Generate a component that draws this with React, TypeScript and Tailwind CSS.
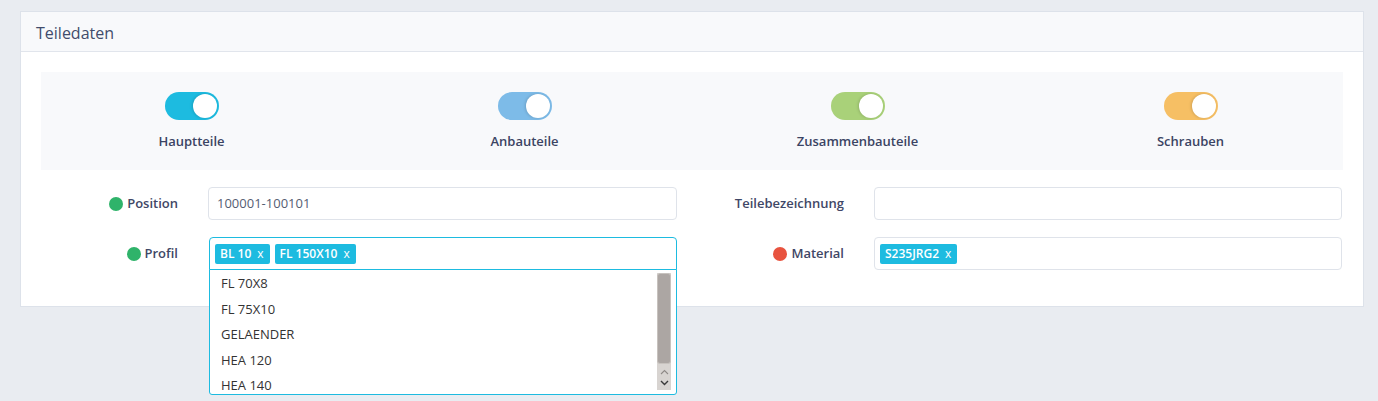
const toggles = [
  { label: "Hauptteile", color: "bg-[#1dbbe0]" },
  { label: "Anbauteile", color: "bg-[#7dbbe8]" },
  { label: "Zusammenbauteile", color: "bg-[#a9d179]" },
  { label: "Schrauben", color: "bg-[#f6bf64]" },
];

const options = ["FL 70X8", "FL 75X10", "GELAENDER", "HEA 120", "HEA 140"];

function Toggle({ color }: { color: string }) {
  return (
    <div className={`relative h-[28px] w-[54px] rounded-full ${color}`}>
      <div className="absolute right-[2px] top-[2px] h-[24px] w-[24px] rounded-full bg-white shadow-[-1px_0_3px_rgba(0,0,0,0.15)]" />
    </div>
  );
}

function Dot({ color }: { color: string }) {
  return <span className={`inline-block h-[14px] w-[14px] rounded-full ${color} mr-[4px]`} />;
}

function Tag({ text }: { text: string }) {
  return (
    <span className="flex h-[20px] items-center rounded-[2px] bg-[#1dbbe0] pl-[5px] pr-[6px] text-[12px] font-semibold text-white">
      {text} <span className="ml-[6px] font-normal">x</span>
    </span>
  );
}

function Label({ children }: { children: React.ReactNode }) {
  return (
    <div className="flex h-[33px] items-center justify-end pr-[30px] text-[13px] font-semibold text-[#3f4766]">
      {children}
    </div>
  );
}

export default function App() {
  return (
    <div className="min-h-[401px] bg-[#e9ecf1] pt-[11px] font-['Open_Sans',sans-serif]">
      <div className="ml-[20px] w-[1344px] border border-[#dde2ea] bg-white">
        {/* Header */}
        <div className="flex h-[40px] items-center border-b border-[#e1e5ec] bg-[#f8f9fb] px-[15px] pt-[3px] text-[16px] text-[#414c6b]">
          Teiledaten
        </div>

        <div className="px-[20px] pb-[36px] pt-[20px]">
          {/* Part type toggles */}
          <div className="h-[98px] bg-[#f8f9fb] pt-[20px]">
            <div className="-ml-[16px] grid w-[1332px] grid-cols-4">
              {toggles.map((t) => (
                <div key={t.label} className="flex flex-col items-center">
                  <Toggle color={t.color} />
                  <div className="mt-[12px] text-[13px] font-semibold leading-[18px] text-[#3b4463]">
                    {t.label}
                  </div>
                </div>
              ))}
            </div>
          </div>

          {/* Form */}
          <div className="mt-[17px] grid grid-cols-[167px_469px_197px_468px] gap-y-[17px]">
            <Label>
              <Dot color="bg-[#2fb36a]" />
              Position
            </Label>
            <div className="flex h-[33px] items-center rounded-[4px] border border-[#dfe3ea] px-[8px] text-[13px] text-[#555d72]">
              100001-100101
            </div>
            <Label>Teilebezeichnung</Label>
            <div className="h-[33px] rounded-[4px] border border-[#dfe3ea]" />

            <Label>
              <Dot color="bg-[#2fb36a]" />
              Profil
            </Label>
            <div className="relative ml-[1px]">
              <div className="flex h-[33px] items-center gap-[5px] rounded-t-[4px] border border-[#1dbbe0] px-[5px]">
                <Tag text="BL 10" />
                <Tag text="FL 150X10" />
              </div>
              {/* Dropdown list */}
              <div className="absolute left-0 top-[32px] z-10 h-[126px] w-full overflow-hidden rounded-b-[3px] border border-[#1dbbe0] bg-white pt-[1px]">
                {options.map((o) => (
                  <div key={o} className="h-[25.5px] px-[11px] text-[13px] leading-[25.5px] text-[#333]">
                    {o}
                  </div>
                ))}
                <div className="absolute right-[5px] top-[3px] flex h-[117px] w-[14px] flex-col bg-[#d8d4d1]">
                  <div className="h-[91px] rounded-[3px] border border-[#c7c2be] bg-[#aca6a3]" />
                  <div className="flex flex-1 flex-col items-center justify-center gap-[5px]">
                    <svg width="9" height="6" viewBox="0 0 9 6" fill="none">
                      <path d="M1 5 L4.5 1.5 L8 5" stroke="#8f8a87" strokeWidth="1.1" />
                    </svg>
                    <svg width="9" height="6" viewBox="0 0 9 6" fill="none">
                      <path d="M1 1 L4.5 4.5 L8 1" stroke="#3a3a3a" strokeWidth="1.4" />
                    </svg>
                  </div>
                </div>
              </div>
            </div>
            <Label>
              <Dot color="bg-[#e8533f]" />
              Material
            </Label>
            <div className="flex h-[33px] items-center rounded-[4px] border border-[#dfe3ea] px-[5px]">
              <Tag text="S235JRG2" />
            </div>
          </div>
        </div>
      </div>
    </div>
  );
}
